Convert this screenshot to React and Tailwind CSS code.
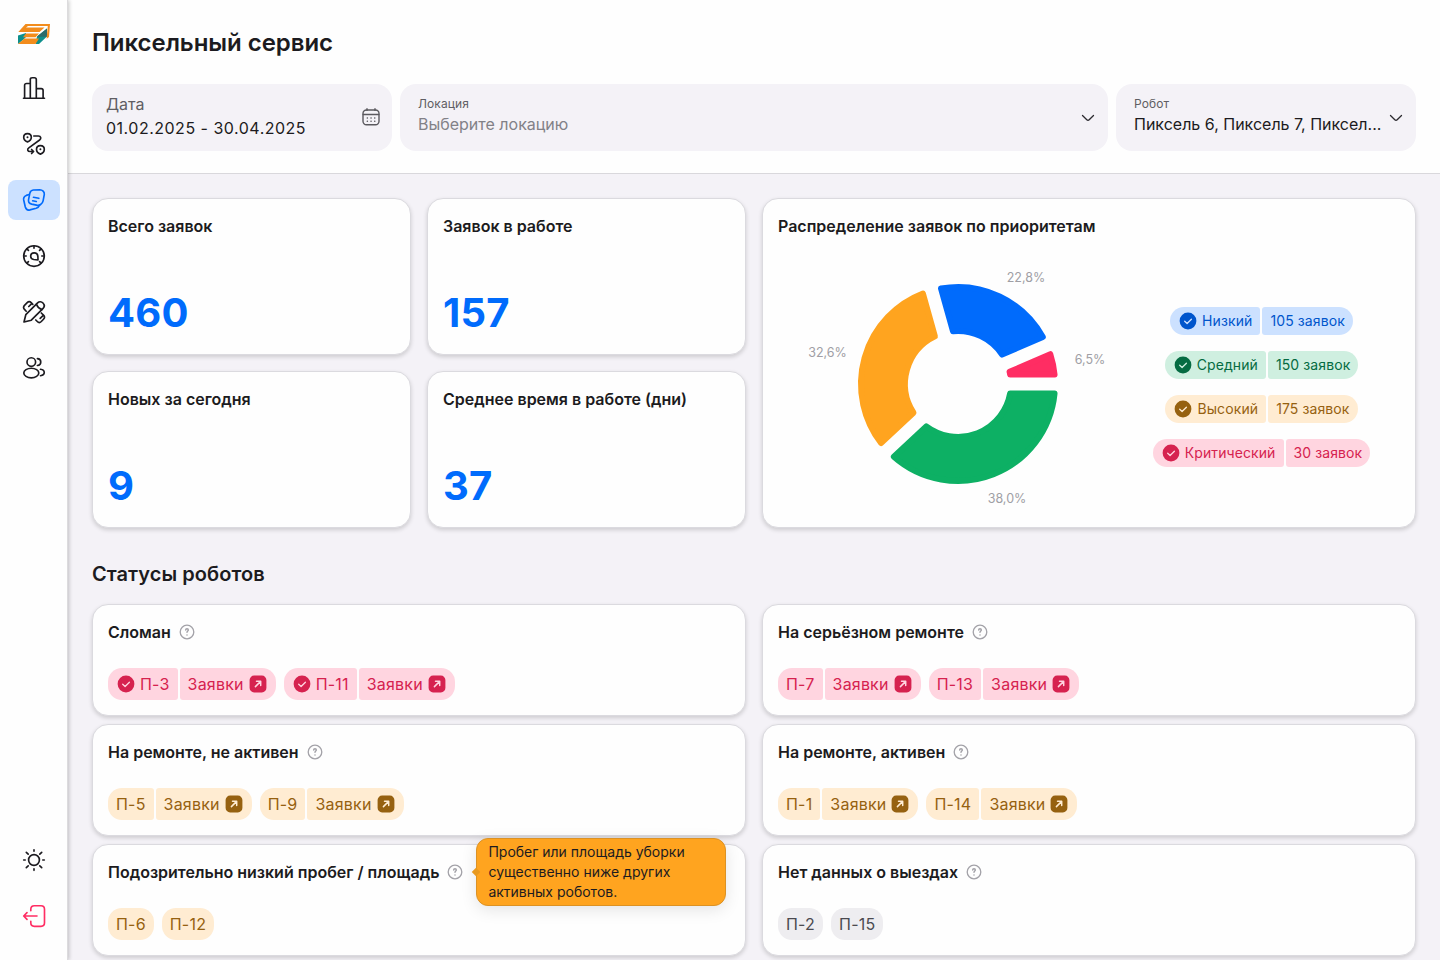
import clsx from 'clsx'

const TONES = {
    blue: { tag: 'bg-[#cce1ff] text-[#0055cc]', shape: 'fill-[#0055cc]', icon: 'text-[#cce1ff]' },
    green: { tag: 'bg-[#cfefe0] text-[#056b42]', shape: 'fill-[#056b42]', icon: 'text-[#cfefe0]' },
    orange: { tag: 'bg-[#ffecd2] text-[#966110]', shape: 'fill-[#966110]', icon: 'text-[#ffecd2]' },
    red: { tag: 'bg-[#ffd5e0] text-[#d6224f]', shape: 'fill-[#d6224f]', icon: 'text-[#ffd5e0]' },
    gray: { tag: 'bg-[#eeedf0] text-[#4b4a50]', shape: 'fill-[#4b4a50]', icon: 'text-[#eeedf0]' },
}

const STATS = [
    { title: 'Всего заявок', value: '460' },
    { title: 'Заявок в работе', value: '157' },
    { title: 'Новых за сегодня', value: '9' },
    { title: 'Среднее время в работе (дни)', value: '37' },
]

const PRIORITIES = [
    { name: 'Низкий', count: '105 заявок', tone: 'blue' },
    { name: 'Средний', count: '150 заявок', tone: 'green' },
    { name: 'Высокий', count: '175 заявок', tone: 'orange' },
    { name: 'Критический', count: '30 заявок', tone: 'red' },
]

// angles are in degrees, clockwise from three o'clock
const SEGMENTS = [
    { from: 0, to: 136.96, color: '#0db064', label: '38,0%', x: 229, y: 263.5 },
    { from: 136.96, to: 254.35, color: '#ffa41f', label: '32,6%', x: 49.5, y: 117.5 },
    { from: 254.35, to: 336.52, color: '#006bfc', label: '22,8%', x: 248, y: 42.5 },
    { from: 336.52, to: 360, color: '#ff2d63', label: '6,5%', x: 312, y: 124.5 },
]

const STATUSES = [
    { title: 'Сломан', tone: 'red', checked: true, links: true, robots: ['П-3', 'П-11'] },
    { title: 'На серьёзном ремонте', tone: 'red', links: true, robots: ['П-7', 'П-13'] },
    { title: 'На ремонте, не активен', tone: 'orange', links: true, robots: ['П-5', 'П-9'] },
    { title: 'На ремонте, активен', tone: 'orange', links: true, robots: ['П-1', 'П-14'] },
    {
        title: 'Подозрительно низкий пробег / площадь',
        tone: 'orange',
        robots: ['П-6', 'П-12'],
        tooltip: 'Пробег или площадь уборки существенно ниже других активных роботов.',
    },
    { title: 'Нет данных о выездах', tone: 'gray', robots: ['П-2', 'П-15'] },
]

function Icon({ children }) {
    return (
        <svg
            className="size-6"
            viewBox="0 0 24 24"
            fill="none"
            stroke="currentColor"
            strokeWidth="1.65"
            strokeLinecap="round"
            strokeLinejoin="round"
        >
            {children}
        </svg>
    )
}

function Logo() {
    return (
        <svg className="h-5 w-8" viewBox="0 0 32 20">
            <path d="M0 11.5 8 9V13L5.500 15.500 0 20Z" fill="#0d8f8c" />
            <path d="M19 12.500 29 4.500V12.500L21 20H17.500Z" fill="#0d8f8c" />
            <path d="M19 12.500 29 4.500V12.800H21Z" fill="#2b6b6a" />
            <path d="M7.500 0H32L31 13 28.600 14.800 29.800 1.900H10L8 3.500H26.500L21.500 8H0.300Z" fill="#f28c1c" />
            <path d="M7.800 9.500H21L17.500 13.200H5Z" fill="#f28c1c" />
            <path d="M6.500 14.500H21L17.500 20H0Z" fill="#f28c1c" />
        </svg>
    )
}

function BarsIcon() {
    return (
        <Icon>
            <path d="M1.500 22.200h21M2.600 22V9.400c0-1.200.7-1.900 1.900-1.900h3.700M8.300 22V3.600c0-1.200.7-1.900 1.900-1.900h2.200c1.200 0 1.900.7 1.900 1.900V22M14.500 12.600h4.700c1.200 0 1.900.7 1.900 1.900V22" />
        </Icon>
    )
}

function RouteIcon() {
    return (
        <Icon>
            <path d="M1.700 5.300c0-5 7.600-5 7.600 0 0 2-1.600 3.900-3.800 4.600C3.300 9.200 1.700 7.300 1.700 5.300ZM14.500 17.300c0-5 7.800-5 7.800 0 0 2-1.700 4.100-3.900 4.800-2.200-.7-3.900-2.800-3.900-4.800Z" />
            <path d="M5.500 5.200v.1M18.400 17.200v.1" strokeWidth="2" />
            <path d="M11.800 4h4.600c2.500 0 3.200 2.600 1.200 4L6.800 15.800c-2 1.500-1.200 3.700 1.200 3.700h3.400m-1.800-2 2 2-2 2" />
        </Icon>
    )
}

function NotesIcon() {
    return (
        <Icon>
            <path d="m11.300 2 6.500-.3c2.600 0 4.800 2.200 4.500 4.600l-1.200 6.600c-.3 1.500-1.300 2.800-2.500 3.600-1.200.8-2.700 1-4.100.6l-4.800-1c-2.400-.6-3.600-2.400-3.100-4.800l1.200-6c.4-1.900 1.700-3.100 3.500-3.300Z" />
            <path d="M7.200 6.500 4.300 7.400C2.300 8.200 1.300 9.900 1.700 12l1.600 7c.6 2.200 2.400 3.400 4.600 2.900l6.300-1.600c1.800-.5 2.800-1.500 3.400-3M11.500 9.300l5.300 1M10.700 12.800l3.600.7" />
        </Icon>
    )
}

function GaugeIcon() {
    return (
        <Icon>
            <circle cx="12" cy="12" r="10.300" />
            <path d="M12 2v2.200M2 12h2.200M19.800 12H22M4.900 4.900l1.500 1.500M19.100 4.900l-1.500 1.500M4.900 19.100l1.500-1.500M19.100 19.100l-1.500-1.500" />
            <path d="m16 16-4.200-.5c-4.500-.7-3.900-6.700.4-6.600 2.400.1 3.600 1.800 3.700 3.700Z" />
        </Icon>
    )
}

function ToolsIcon() {
    return (
        <Icon>
            <path d="m2 22 1.800-7.300L15.600 2.900c3.500-3.500 9 2 5.500 5.500L9.300 20.200Z" />
            <path d="M14.400 4.200c1 2.600 3.200 4.600 5.600 5.400" />
            <path d="m4.200 11.200-1.700-1.800c-1.200-1.300-1.200-2.700 0-4l2.700-2.700c1.300-1.300 2.700-1.300 4 0l1.600 1.600M9.500 3.800 6.800 6.500M13.800 20l1.500 1.500c1.300 1.300 2.700 1.300 4 0l2.200-2.300c1.300-1.300 1.300-2.700 0-4L19.300 13M21 15.700l-2.800 2.700" />
        </Icon>
    )
}

function UsersIcon() {
    return (
        <Icon>
            <circle cx="9.300" cy="6" r="4.300" />
            <ellipse cx="9.300" cy="17" rx="7.500" ry="4.800" />
            <path d="M15.400 2.600c4.500.3 4.500 6.400 0 6.900M18.500 13.300c5 .8 5 5.600 0 6.400" />
        </Icon>
    )
}

function SunIcon() {
    return (
        <Icon>
            <circle cx="12" cy="12" r="5.400" />
            <path d="M12 1.700v1.500M12 20.800v1.500M1.700 12h1.500M20.800 12h1.500M4.300 4.300l1.900 1.900M19.700 4.300l-1.900 1.900M4.300 19.700l1.900-1.900M19.700 19.700l-1.900-1.900" />
        </Icon>
    )
}

function LogoutIcon() {
    return (
        <Icon>
            <path d="M8.800 6.700V5.200c0-2.200 1.300-3.500 3.500-3.500H19c2.200 0 3.500 1.300 3.500 3.500v13.600c0 2.200-1.300 3.500-3.500 3.500h-6.700c-2.200 0-3.500-1.300-3.500-3.500v-1.500M15 12H2M5 8.700 1.700 12 5 15.300" />
        </Icon>
    )
}

const NAV = [
    { id: 'stats', icon: BarsIcon },
    { id: 'routes', icon: RouteIcon },
    { id: 'requests', icon: NotesIcon, active: true },
    { id: 'mileage', icon: GaugeIcon },
    { id: 'editor', icon: ToolsIcon },
    { id: 'users', icon: UsersIcon },
]

function NavButton({ icon: NavIcon, className }) {
    return (
        <button className={clsx('flex h-10 w-[52px] items-center justify-center rounded-lg', className)}>
            <NavIcon />
        </button>
    )
}

function Sidebar() {
    return (
        <aside className="z-10 flex h-full w-[68px] shrink-0 flex-col items-center border-r border-[#dcdbdd] bg-[#fefefe] pt-6 pb-6 shadow-[1px_0_4px_rgba(0,0,0,0.22)]">
            <Logo />
            <nav className="mt-6 flex flex-col gap-4">
                {NAV.map((item) => (
                    <NavButton
                        key={item.id}
                        icon={item.icon}
                        className={item.active ? 'bg-[#cce1ff] text-[#006bfc]' : 'text-[#1c1b20]'}
                    />
                ))}
            </nav>
            <div className="mt-auto flex flex-col gap-4">
                <NavButton icon={SunIcon} className="text-[#1c1b20]" />
                <NavButton icon={LogoutIcon} className="text-[#ff2d63]" />
            </div>
        </aside>
    )
}

function Chevron() {
    return (
        <svg className="h-2 w-3.5 shrink-0" viewBox="0 0 14 8" fill="none" stroke="#2b2a2f" strokeWidth="1.300" strokeLinecap="round">
            <path d="m1.500 1.500 4.300 4.300c.8.8 1.600.8 2.400 0l4.300-4.300" />
        </svg>
    )
}

function CalendarIcon() {
    return (
        <svg className="mb-0.5 size-5" viewBox="0 0 20 20" fill="none" stroke="#5a595e" strokeWidth="1.400" strokeLinecap="round">
            <rect x="2" y="3" width="16" height="14.800" rx="3.500" />
            <path d="M2.200 7.500h15.600M6 1.800v1.600M14 1.800v1.600" />
            <path d="M6.300 10.900h.1M10 10.900h.1M13.700 10.900h.1M6.300 14.200h.1M10 14.200h.1M13.700 14.200h.1" strokeWidth="1.500" />
        </svg>
    )
}

function SelectField({ label, value, className }) {
    return (
        <div className={clsx('flex h-[67px] items-center rounded-2xl bg-[#f4f2f7] pr-[13px] pl-[18px]', className)}>
            <div className="min-w-0 flex-1 pb-[5px]">
                <div className="text-xs leading-[17px] tracking-[0.1px] text-[#5f5e63]">{label}</div>
                {value}
            </div>
            <Chevron />
        </div>
    )
}

function Header() {
    return (
        <header className="border-b border-[#d9d8dc] bg-[#fefefe] px-6 pt-[25px] pb-[22px]">
            <h1 className="text-2xl leading-9 font-semibold tracking-[-0.05px] text-[#1c1b20]">Пиксельный сервис</h1>
            <div className="mt-[23px] flex gap-2">
                <div className="flex h-[67px] w-[300px] items-center justify-between rounded-2xl bg-[#f4f2f7] pr-[11px] pl-3.5">
                    <div className="pb-1">
                        <div className="text-base leading-6 text-[#5f5e63]">Дата</div>
                        <div className="text-base leading-6 tracking-[0.5px] text-[#1c1b20]">01.02.2025 - 30.04.2025</div>
                    </div>
                    <CalendarIcon />
                </div>
                <SelectField
                    label="Локация"
                    className="flex-1"
                    value={<div className="text-base leading-6 text-[#828187]">Выберите локацию</div>}
                />
                <SelectField
                    label="Робот"
                    className="w-[300px]"
                    value={<div className="text-base leading-6 whitespace-nowrap text-[#1c1b20]">Пиксель 6, Пиксель 7, Пиксел...</div>}
                />
            </div>
        </header>
    )
}

function Card({ className, children }) {
    return (
        <section className={clsx('rounded-2xl border border-[#dbdadf] bg-[#fefefe] px-[15px] shadow-[0_2px_4px_rgba(0,0,0,0.16)]', className)}>
            {children}
        </section>
    )
}

function CheckIcon({ tone }) {
    return (
        <svg className="size-5" viewBox="0 0 20 20" fill="none">
            <circle cx="10" cy="10" r="8.400" className={TONES[tone].shape} />
            <path className={TONES[tone].icon} d="m6.700 10.200 2.400 2.300 4.300-4.300" stroke="currentColor" strokeWidth="1.300" strokeLinecap="round" strokeLinejoin="round" />
        </svg>
    )
}

function LinkIcon({ tone }) {
    return (
        <svg className="size-5" viewBox="0 0 20 20" fill="none">
            <rect x="1.600" y="1.600" width="16.800" height="16.800" rx="4.500" className={TONES[tone].shape} />
            <path className={TONES[tone].icon} d="m7.400 12.600 5-5M8.500 7.300h4.200v4.200" stroke="currentColor" strokeWidth="1.500" strokeLinecap="round" strokeLinejoin="round" />
        </svg>
    )
}

function Tag({ tone, small, className, children }) {
    return (
        <span
            className={clsx(
                'flex items-center gap-1 px-2',
                small ? 'h-7 text-sm tracking-[0.1px]' : 'h-8 text-base tracking-[0.2px]',
                TONES[tone].tag,
                className
            )}
        >
            {children}
        </span>
    )
}

function segmentPath({ from, to }) {
    const cx = 180
    const cy = 145
    const inset = 3
    const gap = 6.4 + inset
    const outer = 100 - inset
    const inner = 50 + inset
    const point = (r, deg, side) => {
        const a = (deg * Math.PI) / 180 + side * Math.asin(gap / r)
        return `${(cx + r * Math.cos(a)).toFixed(2)} ${(cy + r * Math.sin(a)).toFixed(2)}`
    }
    return [
        `M${point(outer, from, 1)}`,
        `A${outer} ${outer} 0 0 1 ${point(outer, to, -1)}`,
        `L${point(inner, to, -1)}`,
        `A${inner} ${inner} 0 0 0 ${point(inner, from, 1)}Z`,
    ].join('')
}

function Donut() {
    return (
        <svg className="h-[272px] w-[360px]" viewBox="0 0 360 272">
            {SEGMENTS.map((s) => (
                <g key={s.label}>
                    <path d={segmentPath(s)} fill={s.color} stroke={s.color} strokeWidth="6" strokeLinejoin="round" />
                    <text x={s.x} y={s.y} textAnchor="middle" fontSize="12.500" fill="#a09fa5">
                        {s.label}
                    </text>
                </g>
            ))}
        </svg>
    )
}

function PriorityCard() {
    return (
        <Card className="pt-[15px]">
            <h2 className="text-base leading-6 font-semibold">Распределение заявок по приоритетам</h2>
            <div className="mt-px flex">
                <Donut />
                <div className="mt-[68px] flex w-[247px] flex-col items-center gap-4">
                    {PRIORITIES.map((p) => (
                        <div key={p.name} className="flex gap-0.5">
                            <Tag tone={p.tone} small className="rounded-l-[14px] rounded-r-[3px]">
                                <CheckIcon tone={p.tone} />
                                {p.name}
                            </Tag>
                            <Tag tone={p.tone} small className="rounded-l-[3px] rounded-r-[14px]">
                                {p.count}
                            </Tag>
                        </div>
                    ))}
                </div>
            </div>
        </Card>
    )
}

function Help({ tooltip }) {
    return (
        <span className="relative">
            <svg className="size-4" viewBox="0 0 16 16" fill="none" stroke="#a3a2a8" strokeLinecap="round" strokeLinejoin="round">
                <circle cx="8" cy="8" r="6.800" strokeWidth="1.300" />
                <path d="M6.700 6.100c0-1.900 2.600-1.900 2.600 0 0 .9-1.300 1-1.300 2.200M8 10.900v.1" strokeWidth="1.500" />
            </svg>
            {tooltip && (
                <span className="absolute top-1/2 left-[29px] z-10 w-[250px] -translate-y-1/2 rounded-xl border border-[#dc9224] bg-[#ffa41f] px-[11px] py-[3px] text-sm leading-5 font-normal text-[#1c1b20] shadow-[0_4px_16px_rgba(0,0,0,0.1)]">
                    <span className="absolute top-1/2 -left-1 size-1.5 -translate-y-1/2 rotate-45 bg-[#e8991f]" />
                    {tooltip}
                </span>
            )}
        </span>
    )
}

function StatusCard({ title, tone, checked, links, robots, tooltip }) {
    return (
        <Card className="h-28 pt-[15px]">
            <h3 className="flex items-center gap-2 text-base leading-6 font-semibold">
                {title}
                <Help tooltip={tooltip} />
            </h3>
            <div className="mt-6 flex gap-2">
                {robots.map((robot) => (
                    <div key={robot} className="flex gap-0.5">
                        <Tag tone={tone} className={links ? 'rounded-l-[14px] rounded-r-[3px]' : 'rounded-[14px]'}>
                            {checked && <CheckIcon tone={tone} />}
                            {robot}
                        </Tag>
                        {links && (
                            <Tag tone={tone} className="rounded-l-[3px] rounded-r-[14px]">
                                Заявки
                                <LinkIcon tone={tone} />
                            </Tag>
                        )}
                    </div>
                ))}
            </div>
        </Card>
    )
}

function App() {
    return (
        <div className="flex h-screen overflow-hidden bg-[#f4f2f7] font-['Inter',sans-serif] text-[#1c1b20]">
            <Sidebar />
            <div className="min-w-0 flex-1">
                <Header />
                <main className="px-6 pt-6">
                    <div className="grid h-[330px] grid-cols-2 gap-4">
                        <div className="grid grid-cols-2 grid-rows-2 gap-4">
                            {STATS.map((s) => (
                                <Card key={s.title} className="flex flex-col justify-between pt-[15px] pb-[11px]">
                                    <h2 className="text-base leading-6 font-semibold">{s.title}</h2>
                                    <div className="text-[40px] leading-[60px] font-bold tracking-[0.2px] text-[#006bfc]">{s.value}</div>
                                </Card>
                            ))}
                        </div>
                        <PriorityCard />
                    </div>
                    <h2 className="mt-8 text-xl leading-7 font-semibold tracking-[0.05px]">Статусы роботов</h2>
                    <div className="mt-4 grid grid-cols-2 gap-x-4 gap-y-2">
                        {STATUSES.map((s) => (
                            <StatusCard key={s.title} {...s} />
                        ))}
                    </div>
                </main>
            </div>
        </div>
    )
}

export default App
